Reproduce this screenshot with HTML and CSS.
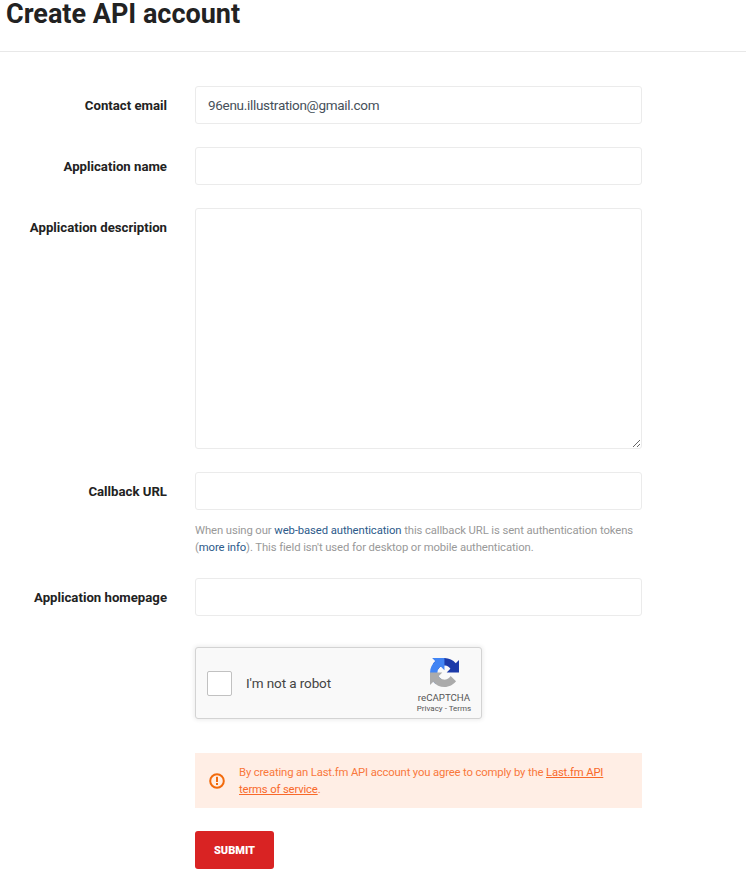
FILE: index.html
```html
<!DOCTYPE html>
<html lang="en">
<head>
<meta charset="utf-8">
<title>Create API account</title>
<link rel="stylesheet" href="styles.css">
</head>
<body>
<header class="page-head">
  <h1 class="page-title">Create API account</h1>
</header>
<form class="form">
  <div class="row">
    <label class="label">Contact email</label>
    <div class="field"><input class="input" type="text" value="96enu.illustration@gmail.com"></div>
  </div>
  <div class="row">
    <label class="label">Application name</label>
    <div class="field"><input class="input" type="text"></div>
  </div>
  <div class="row">
    <label class="label">Application description</label>
    <div class="field"><textarea class="input textarea"></textarea></div>
  </div>
  <div class="row">
    <label class="label">Callback URL</label>
    <div class="field">
      <input class="input" type="text">
      <p class="help">When using our <a href="#">web-based authentication</a> this callback URL is sent authentication tokens (<a href="#">more info</a>). This field isn't used for desktop or mobile authentication.</p>
    </div>
  </div>
  <div class="row">
    <label class="label">Application homepage</label>
    <div class="field"><input class="input" type="text"></div>
  </div>
  <div class="row row-captcha">
    <div class="field">
      <div class="captcha">
        <span class="captcha-box"></span>
        <span class="captcha-text">I'm not a robot</span>
        <div class="captcha-brand">
          <svg class="captcha-logo" width="29" height="29" viewBox="0 0 64 64" aria-hidden="true">
            <path fill="#1c3aa9" d="M64 31.955l-.033-1.37V4.687l-7.16 7.16C50.948 4.674 42.033.093 32.05.093c-10.4 0-19.622 4.96-25.458 12.64l11.736 11.86a15.55 15.55 0 0 1 4.754-5.334c2.05-1.6 4.952-2.906 8.968-2.906.485 0 .86.057 1.135.163 4.976.393 9.29 3.14 11.83 7.126l-8.307 8.307c10.522-.04 22.4-.066 27.295.005"/>
            <path fill="#4285f4" d="M31.95.001l-1.37.033H4.687l7.16 7.16C4.674 13.053.093 21.968.093 31.95c0 10.4 4.96 19.622 12.64 25.458l11.86-11.736a15.55 15.55 0 0 1-5.334-4.754c-1.6-2.05-2.906-4.952-2.906-8.968 0-.485.057-.86.163-1.135.393-4.976 3.14-9.29 7.126-11.83l8.307 8.307c-.04-10.522-.066-22.4.005-27.295"/>
            <path fill="#ababab" d="M.001 32.05l.033 1.37v25.892l7.16-7.16c5.858 7.173 14.773 11.754 24.755 11.754 10.4 0 19.622-4.96 25.458-12.64l-11.86-11.736a15.55 15.55 0 0 1-4.754 5.334c-2.05 1.6-4.952 2.906-8.968 2.906-.485 0-.86-.057-1.135-.163-4.976-.393-9.29-3.14-11.83-7.126l8.307-8.307c-10.522.04-22.4.066-27.295-.005"/>
          </svg>
          <span class="brand-name">reCAPTCHA</span>
          <span class="brand-links">Privacy - Terms</span>
        </div>
      </div>
    </div>
  </div>
  <div class="row row-notice">
    <div class="field">
      <div class="notice">
        <svg class="notice-icon" width="16" height="16" viewBox="0 0 16 16" aria-hidden="true">
          <circle cx="8" cy="8" r="6.800" fill="none" stroke="#f26a0c" stroke-width="2"/>
          <rect x="7" y="3.800" width="2" height="5.200" fill="#f26a0c"/>
          <rect x="7" y="10" width="2" height="2" fill="#f26a0c"/>
        </svg>
        <p class="notice-text">By creating an Last.fm API account you agree to comply by the <a href="#">Last.fm API terms of service</a>.</p>
      </div>
    </div>
  </div>
  <div class="row">
    <div class="field"><button class="submit" type="button">SUBMIT</button></div>
  </div>
</form>
</body>
</html>
```
FILE: styles.css
```css
* { box-sizing: border-box; }
html, body { margin: 0; padding: 0; background: #fff; }
body {
  font-family: Roboto, "Liberation Sans", sans-serif;
  color: #222;
  overflow: hidden;
}
.page-head {
  height: 52px;
  border-bottom: 1px solid #e8e8e8;
  padding: 1px 0 0 6px;
}
.page-title {
  margin: 0;
  font-size: 27px;
  line-height: 27px;
  font-weight: 700;
  color: #222;
}
.form {
  padding-top: 34px;
  display: flex;
  flex-direction: column;
  gap: 23px;
}
.row {
  display: grid;
  grid-template-columns: 167px 447px;
  column-gap: 28px;
  align-items: start;
}
.row-captcha { margin-top: 8px; }
.row-notice { margin-top: 11px; }
.field { grid-column: 2; }
.label {
  grid-column: 1;
  text-align: right;
  font-size: 13.200px;
  font-weight: 700;
  line-height: 18px;
  padding-top: 11px;
  color: #222;
}
.input {
  display: block;
  width: 100%;
  height: 38px;
  border: 1px solid #ebebeb;
  border-radius: 3px;
  background: #fff;
  padding: 0 12px;
  font-family: Roboto, "Liberation Sans", sans-serif;
  font-size: 13.500px;
  letter-spacing: -0.3px;
  color: #46505a;
  outline: none;
}
.textarea {
  height: 241px;
  resize: vertical;
}
.help {
  margin: 12px 0 -1px;
  font-size: 11.300px;
  line-height: 17px;
  letter-spacing: -0.1px;
  color: #999;
}
.help a { color: #2c5a8a; text-decoration: none; }
.captcha {
  width: 287px;
  height: 72px;
  background: #f9f9f9;
  border: 1px solid #d3d3d3;
  border-radius: 3px;
  box-shadow: 0 0 4px 1px rgba(0, 0, 0, 0.08);
  display: flex;
  align-items: center;
  padding-left: 11px;
}
.captcha-box {
  width: 25px;
  height: 25px;
  background: #fff;
  border: 1px solid #c1c1c1;
  border-radius: 2px;
  flex: none;
}
.captcha-text {
  margin-left: 14px;
  font-size: 13.500px;
  letter-spacing: -0.1px;
  color: #444;
  flex: 1;
}
.captcha-brand {
  width: 70px;
  margin-right: 2px;
  display: flex;
  flex-direction: column;
  align-items: center;
  padding-top: 6px;
}
.captcha-logo { display: block; margin-bottom: 4px; }
.brand-name {
  font-size: 9.700px;
  line-height: 13px;
  color: #555;
}
.brand-links {
  font-size: 8px;
  line-height: 10px;
  color: #555;
}
.notice {
  height: 55px;
  background: #ffeee5;
  display: flex;
  align-items: center;
  padding: 0 17px 0 14px;
}
.notice-icon { flex: none; margin-right: 14px; }
.notice-text {
  margin: 0;
  font-size: 11.300px;
  line-height: 17px;
  letter-spacing: -0.15px;
  color: #f9783c;
}
.notice-text a { color: #f9692a; }
.submit {
  display: block;
  width: 79px;
  height: 38px;
  border: 0;
  border-radius: 3px;
  background: #d92323;
  color: #fff;
  font-family: Roboto, "Liberation Sans", sans-serif;
  font-size: 11px;
  font-weight: 900;
  letter-spacing: 0;
  padding: 0;
}
```
